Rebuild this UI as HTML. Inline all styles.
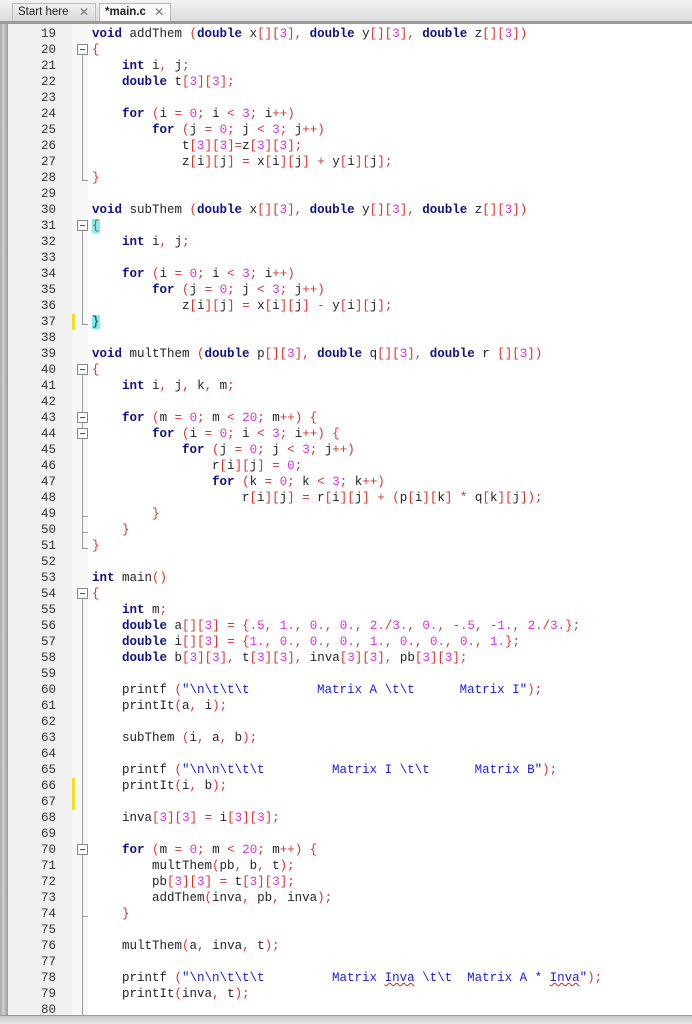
<!DOCTYPE html>
<html><head><meta charset="utf-8"><style>
*{margin:0;padding:0;box-sizing:border-box}
body{width:692px;height:1024px;overflow:hidden;background:#fff;font-family:"Liberation Sans",sans-serif;position:relative}
#tabs{position:absolute;left:0;top:0;width:692px;height:24px;background:linear-gradient(#f4f4f4,#dcdcdc);border-bottom:3px solid #9a9a9a}
.tab{position:absolute;top:3px;height:18px;font-size:11.5px;color:#222;padding:2px 0 0 5px;border:1px solid #b8b8b8;border-bottom:none;background:linear-gradient(#f0f0f0,#d8d8d8)}
.tab .x{position:absolute;right:6px;top:1px;color:#777;font-size:12px}
#lb{position:absolute;left:0;top:24px;width:8px;height:1000px;background:linear-gradient(90deg,#a8a8a8,#cfcfcf 40%,#9a9a9a)}
#gut{position:absolute;left:8px;top:24px;width:64px;height:992px;background:#f0f0f0}
#fold{position:absolute;left:72px;top:24px;width:16px;height:992px;background:#f8f8f8}
#bot{position:absolute;left:0;top:1015px;width:692px;height:9px;background:linear-gradient(#c8c8c8,#e8e8e8);border-top:1px solid #999}
pre{position:absolute;font-family:"Liberation Mono",monospace;font-size:12.5px;line-height:16px;top:26px}
#nums{left:8px;width:48px;text-align:right;color:#333}
#code{left:92px;color:#222}
.k{color:#10108a;font-weight:bold}.o{color:#e0302a}.n{color:#e030e0}.s{color:#1a1aee}
.u{text-decoration:underline wavy #e02020;text-decoration-thickness:1px}
.hl{background:#7ff0f0}
.fb{position:absolute;left:77px;width:11px;height:11px;border:1px solid #888;background:#fff}
.fb:after{content:"";position:absolute;left:2px;top:4px;width:5px;height:1px;background:#555}
.vl{position:absolute;left:82px;width:1px;background:#999}
.el{position:absolute;left:82px;width:6px;height:1px;background:#999}
.ym{position:absolute;left:72px;width:3px;height:16px;background:#f0e020}
</style></head><body>
<div id="tabs">
<div class="tab" style="left:12px;width:84px;border-color:#bbb">Start here<span class="x">✕</span></div>
<div class="tab" style="left:99px;width:72px;background:#fafafa;font-weight:bold">*main.c<span class="x" style="font-weight:normal">✕</span></div>
</div>
<div id="lb"></div><div id="gut"></div><div id="fold"></div>
<div class="ym" style="top:314px"></div><div class="ym" style="top:778px"></div><div class="ym" style="top:794px"></div>
<!-- fold structure -->
<div class="fb" style="top:44px"></div><div class="vl" style="top:55px;height:125px"></div><div class="el" style="top:180px"></div>
<div class="fb" style="top:220px"></div><div class="vl" style="top:231px;height:93px"></div><div class="el" style="top:324px"></div>
<div class="fb" style="top:364px"></div><div class="vl" style="top:375px;height:173px"></div>
<div class="fb" style="top:412px"></div><div class="fb" style="top:428px"></div>
<div class="el" style="top:516px"></div><div class="el" style="top:532px"></div><div class="el" style="top:548px"></div>
<div class="fb" style="top:588px"></div><div class="vl" style="top:599px;height:417px"></div>
<div class="fb" style="top:844px"></div><div class="el" style="top:916px"></div>
<pre id="nums">19
20
21
22
23
24
25
26
27
28
29
30
31
32
33
34
35
36
37
38
39
40
41
42
43
44
45
46
47
48
49
50
51
52
53
54
55
56
57
58
59
60
61
62
63
64
65
66
67
68
69
70
71
72
73
74
75
76
77
78
79
80</pre>
<pre id="code"><span class="k">void</span> addThem <span class="o">(</span><span class="k">double</span> x<span class="o">[][</span><span class="n">3</span><span class="o">],</span> <span class="k">double</span> y<span class="o">[][</span><span class="n">3</span><span class="o">],</span> <span class="k">double</span> z<span class="o">[][</span><span class="n">3</span><span class="o">])</span>
<span class="o">{</span>
    <span class="k">int</span> i<span class="o">,</span> j<span class="o">;</span>
    <span class="k">double</span> t<span class="o">[</span><span class="n">3</span><span class="o">][</span><span class="n">3</span><span class="o">];</span>

    <span class="k">for</span> <span class="o">(</span>i <span class="o">=</span> <span class="n">0</span><span class="o">;</span> i <span class="o">&lt;</span> <span class="n">3</span><span class="o">;</span> i<span class="o">++)</span>
        <span class="k">for</span> <span class="o">(</span>j <span class="o">=</span> <span class="n">0</span><span class="o">;</span> j <span class="o">&lt;</span> <span class="n">3</span><span class="o">;</span> j<span class="o">++)</span>
            t<span class="o">[</span><span class="n">3</span><span class="o">][</span><span class="n">3</span><span class="o">]=</span>z<span class="o">[</span><span class="n">3</span><span class="o">][</span><span class="n">3</span><span class="o">];</span>
            z<span class="o">[</span>i<span class="o">][</span>j<span class="o">]</span> <span class="o">=</span> x<span class="o">[</span>i<span class="o">][</span>j<span class="o">]</span> <span class="o">+</span> y<span class="o">[</span>i<span class="o">][</span>j<span class="o">];</span>
<span class="o">}</span>

<span class="k">void</span> subThem <span class="o">(</span><span class="k">double</span> x<span class="o">[][</span><span class="n">3</span><span class="o">],</span> <span class="k">double</span> y<span class="o">[][</span><span class="n">3</span><span class="o">],</span> <span class="k">double</span> z<span class="o">[][</span><span class="n">3</span><span class="o">])</span>
<span class="o hl">{</span>
    <span class="k">int</span> i<span class="o">,</span> j<span class="o">;</span>

    <span class="k">for</span> <span class="o">(</span>i <span class="o">=</span> <span class="n">0</span><span class="o">;</span> i <span class="o">&lt;</span> <span class="n">3</span><span class="o">;</span> i<span class="o">++)</span>
        <span class="k">for</span> <span class="o">(</span>j <span class="o">=</span> <span class="n">0</span><span class="o">;</span> j <span class="o">&lt;</span> <span class="n">3</span><span class="o">;</span> j<span class="o">++)</span>
            z<span class="o">[</span>i<span class="o">][</span>j<span class="o">]</span> <span class="o">=</span> x<span class="o">[</span>i<span class="o">][</span>j<span class="o">]</span> <span class="o">-</span> y<span class="o">[</span>i<span class="o">][</span>j<span class="o">];</span>
<span class="hl" style="color:#222">}</span>

<span class="k">void</span> multThem <span class="o">(</span><span class="k">double</span> p<span class="o">[][</span><span class="n">3</span><span class="o">],</span> <span class="k">double</span> q<span class="o">[][</span><span class="n">3</span><span class="o">],</span> <span class="k">double</span> r <span class="o">[][</span><span class="n">3</span><span class="o">])</span>
<span class="o">{</span>
    <span class="k">int</span> i<span class="o">,</span> j<span class="o">,</span> k<span class="o">,</span> m<span class="o">;</span>

    <span class="k">for</span> <span class="o">(</span>m <span class="o">=</span> <span class="n">0</span><span class="o">;</span> m <span class="o">&lt;</span> <span class="n">20</span><span class="o">;</span> m<span class="o">++)</span> <span class="o">{</span>
        <span class="k">for</span> <span class="o">(</span>i <span class="o">=</span> <span class="n">0</span><span class="o">;</span> i <span class="o">&lt;</span> <span class="n">3</span><span class="o">;</span> i<span class="o">++)</span> <span class="o">{</span>
            <span class="k">for</span> <span class="o">(</span>j <span class="o">=</span> <span class="n">0</span><span class="o">;</span> j <span class="o">&lt;</span> <span class="n">3</span><span class="o">;</span> j<span class="o">++)</span>
                r<span class="o">[</span>i<span class="o">][</span>j<span class="o">]</span> <span class="o">=</span> <span class="n">0</span><span class="o">;</span>
                <span class="k">for</span> <span class="o">(</span>k <span class="o">=</span> <span class="n">0</span><span class="o">;</span> k <span class="o">&lt;</span> <span class="n">3</span><span class="o">;</span> k<span class="o">++)</span>
                    r<span class="o">[</span>i<span class="o">][</span>j<span class="o">]</span> <span class="o">=</span> r<span class="o">[</span>i<span class="o">][</span>j<span class="o">]</span> <span class="o">+</span> <span class="o">(</span>p<span class="o">[</span>i<span class="o">][</span>k<span class="o">]</span> <span class="o">*</span> q<span class="o">[</span>k<span class="o">][</span>j<span class="o">]);</span>
        <span class="o">}</span>
    <span class="o">}</span>
<span class="o">}</span>

<span class="k">int</span> main<span class="o">()</span>
<span class="o">{</span>
    <span class="k">int</span> m<span class="o">;</span>
    <span class="k">double</span> a<span class="o">[][</span><span class="n">3</span><span class="o">]</span> <span class="o">=</span> <span class="o">{</span><span class="n">.5</span><span class="o">,</span> <span class="n">1.</span><span class="o">,</span> <span class="n">0.</span><span class="o">,</span> <span class="n">0.</span><span class="o">,</span> <span class="n">2.</span><span class="o">/</span><span class="n">3.</span><span class="o">,</span> <span class="n">0.</span><span class="o">,</span> <span class="o">-</span><span class="n">.5</span><span class="o">,</span> <span class="o">-</span><span class="n">1.</span><span class="o">,</span> <span class="n">2.</span><span class="o">/</span><span class="n">3.</span><span class="o">};</span>
    <span class="k">double</span> i<span class="o">[][</span><span class="n">3</span><span class="o">]</span> <span class="o">=</span> <span class="o">{</span><span class="n">1.</span><span class="o">,</span> <span class="n">0.</span><span class="o">,</span> <span class="n">0.</span><span class="o">,</span> <span class="n">0.</span><span class="o">,</span> <span class="n">1.</span><span class="o">,</span> <span class="n">0.</span><span class="o">,</span> <span class="n">0.</span><span class="o">,</span> <span class="n">0.</span><span class="o">,</span> <span class="n">1.</span><span class="o">};</span>
    <span class="k">double</span> b<span class="o">[</span><span class="n">3</span><span class="o">][</span><span class="n">3</span><span class="o">],</span> t<span class="o">[</span><span class="n">3</span><span class="o">][</span><span class="n">3</span><span class="o">],</span> inva<span class="o">[</span><span class="n">3</span><span class="o">][</span><span class="n">3</span><span class="o">],</span> pb<span class="o">[</span><span class="n">3</span><span class="o">][</span><span class="n">3</span><span class="o">];</span>

    printf <span class="o">(</span><span class="s">"\n\t\t\t         Matrix A \t\t      Matrix I"</span><span class="o">);</span>
    printIt<span class="o">(</span>a<span class="o">,</span> i<span class="o">);</span>

    subThem <span class="o">(</span>i<span class="o">,</span> a<span class="o">,</span> b<span class="o">);</span>

    printf <span class="o">(</span><span class="s">"\n\n\t\t\t         Matrix I \t\t      Matrix B"</span><span class="o">);</span>
    printIt<span class="o">(</span>i<span class="o">,</span> b<span class="o">);</span>

    inva<span class="o">[</span><span class="n">3</span><span class="o">][</span><span class="n">3</span><span class="o">]</span> <span class="o">=</span> i<span class="o">[</span><span class="n">3</span><span class="o">][</span><span class="n">3</span><span class="o">];</span>

    <span class="k">for</span> <span class="o">(</span>m <span class="o">=</span> <span class="n">0</span><span class="o">;</span> m <span class="o">&lt;</span> <span class="n">20</span><span class="o">;</span> m<span class="o">++)</span> <span class="o">{</span>
        multThem<span class="o">(</span>pb<span class="o">,</span> b<span class="o">,</span> t<span class="o">);</span>
        pb<span class="o">[</span><span class="n">3</span><span class="o">][</span><span class="n">3</span><span class="o">]</span> <span class="o">=</span> t<span class="o">[</span><span class="n">3</span><span class="o">][</span><span class="n">3</span><span class="o">];</span>
        addThem<span class="o">(</span>inva<span class="o">,</span> pb<span class="o">,</span> inva<span class="o">);</span>
    <span class="o">}</span>

    multThem<span class="o">(</span>a<span class="o">,</span> inva<span class="o">,</span> t<span class="o">);</span>

    printf <span class="o">(</span><span class="s">"\n\n\t\t\t         Matrix <span class="u">Inva</span> \t\t  Matrix A * <span class="u">Inva</span>"</span><span class="o">);</span>
    printIt<span class="o">(</span>inva<span class="o">,</span> t<span class="o">);</span>
</pre>
<div id="bot"></div>
</body></html>
